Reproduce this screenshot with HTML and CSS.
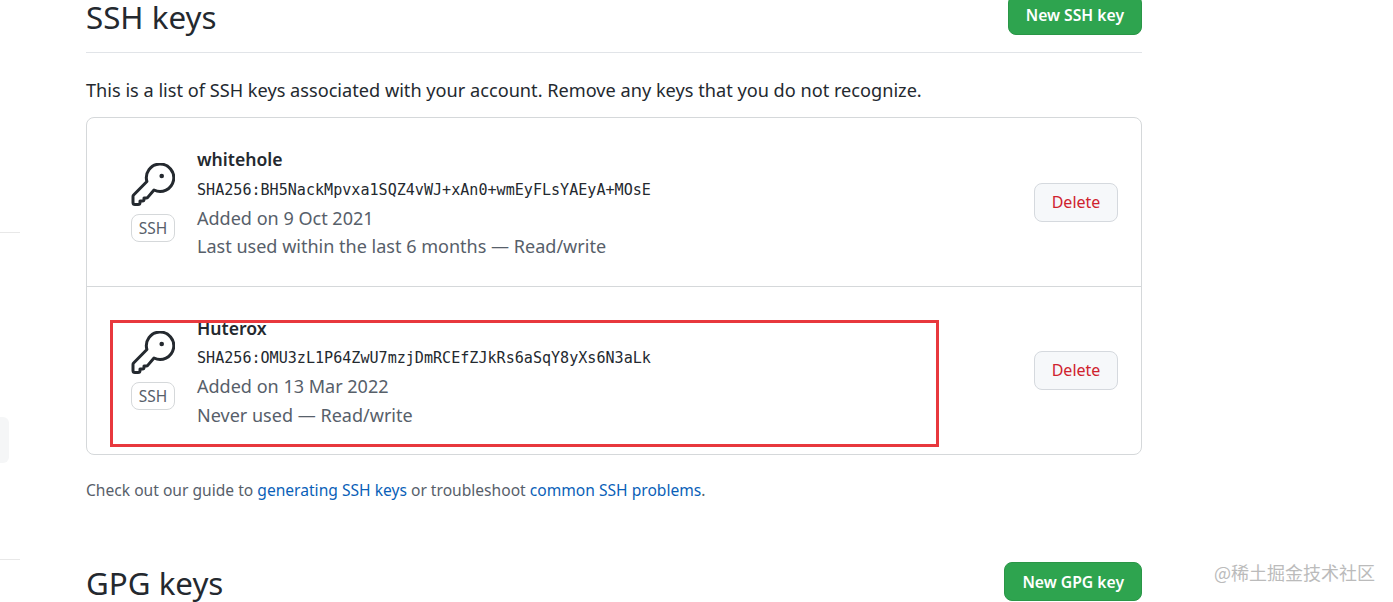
FILE: index.html
```html
<!DOCTYPE html>
<html>
<head>
<meta charset="UTF-8">
<title>SSH and GPG keys</title>
<link rel="stylesheet" href="styles.css">
</head>
<body>
<div class="page">
	<div class="side">
		<div class="side-line side-line-top"></div>
		<div class="side-item"></div>
		<div class="side-line side-line-bottom"></div>
	</div>
	<div class="main">
		<div class="head">
			<h2>SSH keys</h2>
			<a class="btn-new">New SSH key</a>
		</div>
		<p class="intro">This is a list of SSH keys associated with your account. Remove any keys that you do not recognize.</p>
		<div class="box">
			<div class="row">
				<div class="key-type">
					<svg class="key-icon" viewBox="0 0 44 44"><path d="M15.900 18.500L2.600 32a2 2 0 0 0-.6 1.400v6.100a2 2 0 0 0 2 2h3a2 2 0 0 0 2-2V38h2.500a1.500 1.500 0 0 0 1.500-1.500V35h2.500a1.500 1.500 0 0 0 1-.4L23 27A13.700 13.700 0 1 0 15.900 18.500z"/><circle cx="30.700" cy="13" r="2.300"/></svg>
					<span class="badge">SSH</span>
				</div>
				<div class="info">
					<strong>whitehole</strong>
					<code>SHA256:BH5NackMpvxa1SQZ4vWJ+xAn0+wmEyFLsYAEyA+MOsE</code>
					<span>Added on 9 Oct 2021</span>
					<span>Last used within the last 6 months — Read/write</span>
				</div>
				<a class="btn-delete">Delete</a>
			</div>
			<div class="row">
				<div class="key-type">
					<svg class="key-icon" viewBox="0 0 44 44"><path d="M15.900 18.500L2.600 32a2 2 0 0 0-.6 1.400v6.100a2 2 0 0 0 2 2h3a2 2 0 0 0 2-2V38h2.500a1.500 1.500 0 0 0 1.500-1.500V35h2.500a1.500 1.500 0 0 0 1-.4L23 27A13.700 13.700 0 1 0 15.900 18.500z"/><circle cx="30.700" cy="13" r="2.300"/></svg>
					<span class="badge">SSH</span>
				</div>
				<div class="info">
					<strong>Huterox</strong>
					<code>SHA256:OMU3zL1P64ZwU7mzjDmRCEfZJkRs6aSqY8yXs6N3aLk</code>
					<span>Added on 13 Mar 2022</span>
					<span>Never used — Read/write</span>
				</div>
				<a class="btn-delete">Delete</a>
			</div>
		</div>
		<p class="guide">Check out our guide to <a>generating SSH keys</a> or troubleshoot <a>common SSH problems</a>.</p>
		<div class="head head-gpg">
			<h2>GPG keys</h2>
			<a class="btn-new">New GPG key</a>
		</div>
	</div>
</div>
<div class="mark"></div>
<div class="watermark">@稀土掘金技术社区</div>
</body>
</html>
```

FILE: styles.css
```css
html,body{
	margin:0;
	height:602px;
	overflow:hidden;
	background:#fff;
}
body{
	position:relative;
	font-family:"Noto Sans","Open Sans",sans-serif;
	color:#24292f;
}
.page{
	display:flex;
}
.side{
	width:20px;
	margin-right:66px;
	flex:none;
}
.side-line{
	height:1px;
	background:#e8e8e8;
}
.side-line-top{
	margin-top:232px;
}
.side-item{
	width:9px;
	height:46px;
	margin-top:184px;
	background:#f5f6f7;
	border-radius:0 6px 6px 0;
}
.side-line-bottom{
	margin-top:96px;
}
.main{
	width:1056px;
	margin-top:-5px;
}
.head{
	display:flex;
	justify-content:space-between;
	align-items:flex-start;
	height:57px;
	border-bottom:1px solid #e1e4e8;
}
.head h2{
	margin:5px 0 0;
	font-size:31.300px;
	line-height:34px;
	font-weight:400;
}
.head-gpg{
	margin-top:59px;
	border-bottom:0;
}
.head-gpg h2{
	margin-top:4px;
}
.head-gpg .btn-new{
	height:39px;
}
.btn-new{
	box-sizing:border-box;
	padding:0 17px;
	height:40px;
	line-height:38px;
	font-size:15.700px;
	font-weight:600;
	color:#fff;
	background:#2ea44f;
	border:1px solid #2a9647;
	border-radius:8px;
}
.intro{
	margin:24px 0 14px;
	font-size:18.170px;
	line-height:26px;
}
.box{
	border:1px solid #d5d8da;
	border-radius:8px;
}
.row{
	box-sizing:border-box;
	display:flex;
	align-items:center;
	height:168px;
	padding:0 23px 0 44px;
}
.row + .row{
	border-top:1px solid #d5d8da;
}
.key-type{
	width:44px;
	margin-right:22px;
	display:flex;
	flex-direction:column;
	align-items:center;
}
.key-icon{
	width:44px;
	height:44px;
	display:block;
}
.key-icon path{
	fill:none;
	stroke:#24292f;
	stroke-width:3;
	stroke-linejoin:round;
}
.key-icon circle{
	fill:#24292f;
}
.badge{
	margin-top:7px;
	width:42px;
	height:26px;
	line-height:26px;
	text-align:center;
	font-size:15.500px;
	color:#57606a;
	border:1px solid #d5d8da;
	border-radius:8px;
}
.info{
	flex:1;
	display:flex;
	flex-direction:column;
	margin-top:2px;
	font-size:18.050px;
	line-height:28.500px;
	color:#57606a;
}
.info strong{
	font-size:17.600px;
	font-weight:600;
	color:#24292f;
}
.info code{
	font-family:"DejaVu Sans Mono",monospace;
	font-size:15.080px;
	line-height:30px;
	margin:1px 0 -1px;
	color:#24292f;
}
.btn-delete{
	width:82px;
	height:37px;
	line-height:36px;
	text-align:center;
	font-size:16px;
	color:#cf222e;
	background:#f6f8fa;
	border:1px solid #d5d9de;
	border-radius:8px;
}
.guide{
	margin:22px 0 0;
	font-size:15.600px;
	line-height:26px;
	color:#57606a;
}
.guide a{
	color:#0a5fb8;
}
.mark{
	position:absolute;
	left:110px;
	top:320px;
	width:823px;
	height:121px;
	border:3px solid #e8383d;
}
.watermark{
	position:absolute;
	left:1214px;
	top:560px;
	font-family:"Noto Sans CJK SC",sans-serif;
	font-size:18px;
	line-height:24px;
	color:#bbb;
}
```
